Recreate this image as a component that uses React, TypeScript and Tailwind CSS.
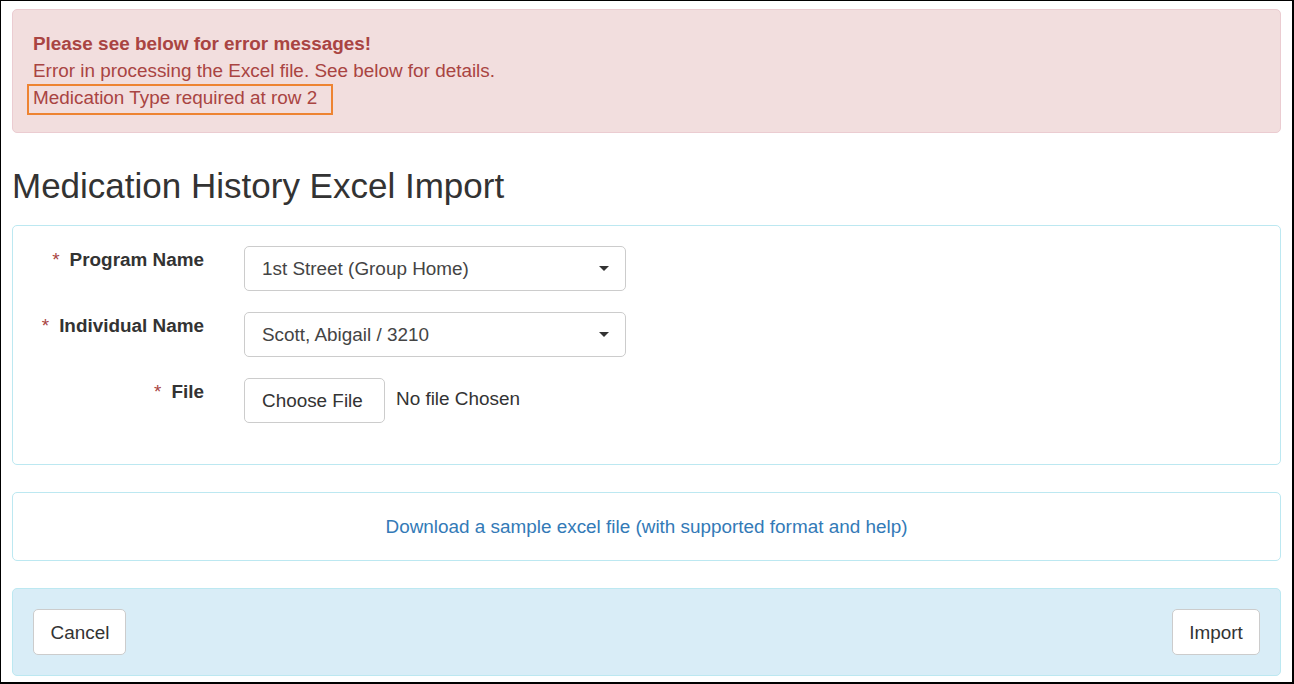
import React from "react";

function Caret() {
  return (
    <svg width="10" height="5" viewBox="0 0 10 5" className="shrink-0">
      <path d="M0 0 L10 0 L5 5 Z" fill="#333" />
    </svg>
  );
}

function Select({ value }: { value: string }) {
  return (
    <div className="flex h-[45px] w-[382px] items-center justify-between rounded-[5px] border border-[#cccccc] bg-white pl-[17px] pr-[16px] text-[#444444]">
      <span>{value}</span>
      <Caret />
    </div>
  );
}

function Label({ text }: { text: string }) {
  return (
    <div className="w-[191px] shrink-0 text-right font-bold text-[#333333]">
      <span className="mr-[10px] font-normal text-[#a94442]">*</span>
      {text}
    </div>
  );
}

export default function App() {
  return (
    <div
      className="box-border h-[684px] w-[1294px] overflow-hidden border-b-2 border-l border-r-2 border-t border-black bg-white px-[11px] pt-[8px] text-[18.9px] leading-[27px] text-[#333333]"
      style={{ fontFamily: '"Liberation Sans", Arial, sans-serif' }}
    >
      {/* Alert */}
      <div className="rounded-[5px] border border-[#ebccd1] bg-[#f2dede] px-5 pb-[21px] pt-5 text-[#a94442]">
        <div className="font-bold">Please see below for error messages!</div>
        <div>Error in processing the Excel file. See below for details.</div>
        <div className="relative">
          Medication Type required at row 2
          <span className="pointer-events-none absolute left-[-6px] top-0 h-[31px] w-[306px] border-2 border-[#ee8432]" />
        </div>
      </div>

      <h1 className="mt-[33px] text-[35px] font-normal leading-[39px] text-[#333333]">
        Medication History Excel Import
      </h1>

      {/* Form panel */}
      <div className="mt-[20px] flex flex-col gap-[21px] rounded-[5px] border border-[#bce8f1] bg-white pb-[41px] pt-5">
        <div className="flex items-start">
          <Label text="Program Name" />
          <div className="ml-[40px]">
            <Select value="1st Street (Group Home)" />
          </div>
        </div>
        <div className="flex items-start">
          <Label text="Individual Name" />
          <div className="ml-[40px]">
            <Select value="Scott, Abigail / 3210" />
          </div>
        </div>
        <div className="flex items-start">
          <Label text="File" />
          <div className="ml-[40px] flex items-center">
            <button className="h-[45px] w-[141px] rounded-[5px] border border-[#cccccc] bg-white pl-[17px] text-left text-[#333333]">
              Choose File
            </button>
            <span className="ml-[11px] -translate-y-[2px] text-[#333333]">No file Chosen</span>
          </div>
        </div>
      </div>

      {/* Download panel */}
      <div className="mt-[27px] rounded-[5px] border border-[#bce8f1] bg-white py-5 text-center">
        <a className="text-[#337ab7]">Download a sample excel file (with supported format and help)</a>
      </div>

      {/* Footer */}
      <div className="mt-[27px] flex items-center justify-between rounded-[5px] border border-[#bce8f1] bg-[#d9edf7] p-5">
        <button className="h-[46px] w-[93px] rounded-[5px] border border-[#cccccc] bg-white pl-[1px] text-[#333333]">
          Cancel
        </button>
        <button className="h-[46px] w-[88px] rounded-[5px] border border-[#cccccc] bg-white text-[#333333]">
          Import
        </button>
      </div>
    </div>
  );
}
